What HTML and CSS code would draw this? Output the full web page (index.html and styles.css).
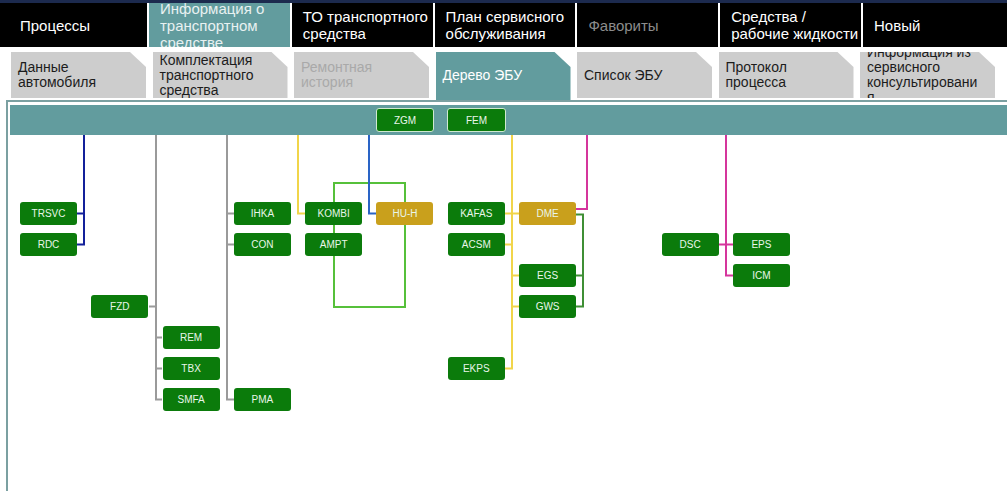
FILE: index.html
```html
<!DOCTYPE html>
<html lang="ru">
<head>
<meta charset="utf-8">
<title>Дерево ЭБУ</title>
<link rel="stylesheet" href="styles.css">
</head>
<body>
<nav class="topnav">
  <div class="top-tab first"><span>Процессы</span></div>
  <div class="top-tab active"><span>Информация о транспортном средстве</span></div>
  <div class="top-tab"><span>ТО транспортного средства</span></div>
  <div class="top-tab"><span>План сервисного обслуживания</span></div>
  <div class="top-tab disabled"><span>Фавориты</span></div>
  <div class="top-tab"><span>Средства / рабочие жидкости</span></div>
  <div class="top-tab last"><span>Новый</span></div>
</nav>
<nav class="subnav">
  <div class="sub-tab"><span>Данные автомобиля</span></div>
  <div class="sub-tab"><span>Комплектация транспортного средства</span></div>
  <div class="sub-tab disabled"><span>Ремонтная история</span></div>
  <div class="sub-tab active"><span>Дерево ЭБУ</span></div>
  <div class="sub-tab"><span>Список ЭБУ</span></div>
  <div class="sub-tab"><span>Протокол процесса</span></div>
  <div class="sub-tab"><span>Информация из сервисного консультирования</span></div>
</nav>
<section class="frame">
  <div class="bar">
    <div class="node bus">ZGM</div>
    <div class="node bus">FEM</div>
  </div>
  <div class="tree">
    <svg class="wires" width="1000" height="340" viewBox="10 135 1000 340" fill="none" stroke-width="2">
      <path class="w-navy" d="M84 135V244.5H77M84 213.5H77"/>
      <path class="w-gray" d="M156 135V399.5H162M149 306.5H156M156 337.5H162M156 368.5H162"/>
      <path class="w-gray" d="M227 135V399.5H234M227 213.5H234M227 244.5H234"/>
      <path class="w-lime" d="M334 183H405V307H334Z"/>
      <path class="w-yellow" d="M298 135V213.5H305"/>
      <path class="w-blue" d="M369 135V213.5H376"/>
      <path class="w-yellow" d="M512 135V368.5H505M505 213.5H519M505 244.5H512M512 275.5H519M512 306.5H519"/>
      <path class="w-magenta" d="M587 135V209H576"/>
      <path class="w-dkgreen" d="M576 214.5H583V306.5H576M583 275.5H576"/>
      <path class="w-magenta" d="M726 135V275.5H733M719 244.5H733"/>
    </svg>
    <div class="node r1 c1">TRSVC</div>
    <div class="node r2 c1">RDC</div>
    <div class="node r4 c2">FZD</div>
    <div class="node r5 c3">REM</div>
    <div class="node r6 c3">TBX</div>
    <div class="node r7 c3">SMFA</div>
    <div class="node r1 c4">IHKA</div>
    <div class="node r2 c4">CON</div>
    <div class="node r7 c4">PMA</div>
    <div class="node r1 c5">KOMBI</div>
    <div class="node r2 c5">AMPT</div>
    <div class="node gold r1 c6">HU-H</div>
    <div class="node r1 c7">KAFAS</div>
    <div class="node r2 c7">ACSM</div>
    <div class="node r6 c7">EKPS</div>
    <div class="node gold r1 c8">DME</div>
    <div class="node r3 c8">EGS</div>
    <div class="node r4 c8">GWS</div>
    <div class="node r2 c10">DSC</div>
    <div class="node r2 c11">EPS</div>
    <div class="node r3 c11">ICM</div>
  </div>
</section>
</body>
</html>
```

FILE: styles.css
```css
html, body {
  margin: 0;
  padding: 0;
  overflow: hidden;
  background: #ffffff;
}

body {
  width: 1007px;
  height: 491px;
  font-family: "Liberation Sans", Arial, sans-serif;
}

/* ---------- top navigation ---------- */
.topnav {
  display: flex;
  gap: 2px;
  height: 44px;
  border-top: 3px solid #1c2a4e;
}

.top-tab {
  flex: 0 0 140.8px;
  box-sizing: border-box;
  display: flex;
  align-items: center;
  overflow: hidden;
  padding: 0 2px 0 11px;
  background: #000000;
  color: #ffffff;
  font-size: 15px;
  line-height: 17px;
}

.top-tab.first {
  flex-basis: 147px;
  padding-left: 20px;
}

.top-tab.last {
  flex: 1 1 auto;
}

.top-tab.active {
  background: #629c9e;
  color: #e8f1f1;
}

.top-tab.disabled {
  color: #8c8c8c;
}

/* ---------- second level tabs ---------- */
.subnav {
  display: flex;
  align-items: flex-start;
  gap: 6.5px;
  height: 48px;
  margin: 5px 0 0 11px;
}

.sub-tab {
  flex: 0 0 135px;
  box-sizing: border-box;
  height: 46px;
  display: flex;
  align-items: center;
  overflow: hidden;
  overflow-wrap: break-word;
  padding: 0 14px 0 7px;
  background: #cdcdcd;
  color: #1c1c1c;
  font-size: 14px;
  line-height: 15px;
  clip-path: polygon(0 0, calc(100% - 16px) 0, 100% 15px, 100% 100%, 0 100%);
}

.sub-tab span {
  min-width: 0;
}

.sub-tab.active {
  height: 48px;
  padding-bottom: 2px;
  background: #629c9e;
  color: #ffffff;
}

.sub-tab.disabled {
  color: #a9a9a9;
}

/* ---------- tree frame ---------- */
.frame {
  box-sizing: border-box;
  height: 391px;
  margin: 0 -40px 0 6px;
  padding: 3px 0 0 2px;
  border-top: 2px solid #7ba0a1;
  border-left: 2px solid #7ba0a1;
  overflow: hidden;
}

.bar {
  height: 30px;
  display: flex;
  align-items: center;
  gap: 13px;
  padding-left: 365.7px;
  background: #629c9e;
}

.tree {
  position: relative;
  display: grid;
  grid-template-columns: repeat(11, 57px);
  grid-template-rows: repeat(7, 22.5px);
  column-gap: 14.3px;
  row-gap: 8.5px;
  padding: 67.3px 0 0 10px;
}

.wires {
  position: absolute;
  left: 0;
  top: 0;
  overflow: visible;
}

.w-navy { stroke: #13209a; }
.w-gray { stroke: #9a9a9a; }
.w-lime { stroke: #56c03a; }
.w-yellow { stroke: #f1d54a; }
.w-blue { stroke: #2a64c6; }
.w-magenta { stroke: #d5359c; }
.w-dkgreen { stroke: #3f8f35; }

.node {
  position: relative;
  display: flex;
  align-items: center;
  justify-content: center;
  border-radius: 3px;
  background: #0b7b0b;
  color: #e9f6e9;
  font-size: 10px;
}

.node.gold {
  background: #c9a01c;
}

.node.bus {
  box-sizing: border-box;
  width: 58.6px;
  height: 24px;
  border: 1px solid #cfe9cf;
}

.r1 { grid-row: 1; }
.r2 { grid-row: 2; }
.r3 { grid-row: 3; }
.r4 { grid-row: 4; }
.r5 { grid-row: 5; }
.r6 { grid-row: 6; }
.r7 { grid-row: 7; }

.c1 { grid-column: 1; }
.c2 { grid-column: 2; }
.c3 { grid-column: 3; }
.c4 { grid-column: 4; }
.c5 { grid-column: 5; }
.c6 { grid-column: 6; }
.c7 { grid-column: 7; }
.c8 { grid-column: 8; }
.c9 { grid-column: 9; }
.c10 { grid-column: 10; }
.c11 { grid-column: 11; }
```
